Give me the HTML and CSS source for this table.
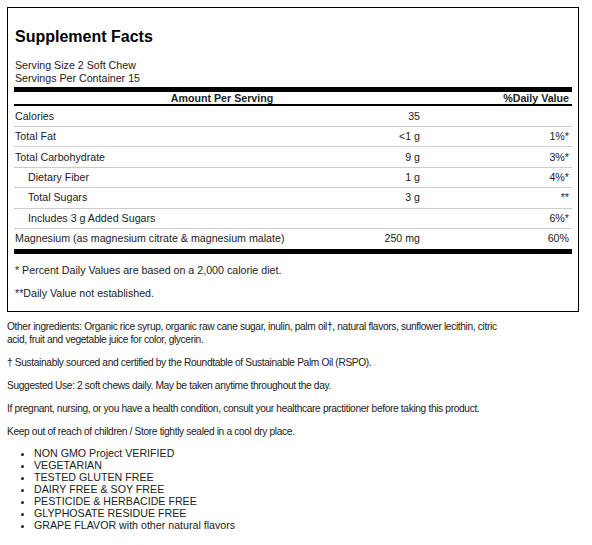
FILE: index.html
```html
<!DOCTYPE html>
<html lang="en">
<head>
<meta charset="utf-8">
<title>Supplement Facts</title>
<link rel="stylesheet" href="styles.css">
</head>
<body>
<div class="label">
  <h1 class="title">Supplement Facts</h1>
  <div class="serving">
    <div>Serving Size 2 Soft Chew</div>
    <div>Servings Per Container 15</div>
  </div>
  <div class="bar"></div>
  <div class="head">
    <span class="head-amt">Amount Per Serving</span>
    <span class="head-dv">%Daily Value</span>
  </div>
  <div class="row first"><span class="name">Calories</span><span class="amt">35</span><span class="dv"></span></div>
  <div class="row"><span class="name">Total Fat</span><span class="amt">&lt;1 g</span><span class="dv">1%*</span></div>
  <div class="row"><span class="name">Total Carbohydrate</span><span class="amt">9 g</span><span class="dv">3%*</span></div>
  <div class="row"><span class="name sub">Dietary Fiber</span><span class="amt">1 g</span><span class="dv">4%*</span></div>
  <div class="row"><span class="name sub">Total Sugars</span><span class="amt">3 g</span><span class="dv">**</span></div>
  <div class="row"><span class="name sub">Includes 3 g Added Sugars</span><span class="amt"></span><span class="dv">6%*</span></div>
  <div class="row last"><span class="name">Magnesium (as magnesium citrate &amp; magnesium malate)</span><span class="amt">250 mg</span><span class="dv">60%</span></div>
  <div class="bar"></div>
  <p class="note">* Percent Daily Values are based on a 2,000 calorie diet.</p>
  <p class="note">**Daily Value not established.</p>
</div>

<div class="details">
  <p class="info">Other ingredients: Organic rice syrup, organic raw cane sugar, inulin, palm oil†, natural flavors, sunflower lecithin, citric acid, fruit and vegetable juice for color, glycerin.</p>
  <p class="info">† Sustainably sourced and certified by the Roundtable of Sustainable Palm Oil (RSPO).</p>
  <p class="info">Suggested Use: 2 soft chews daily. May be taken anytime throughout the day.</p>
  <p class="info">If pregnant, nursing, or you have a health condition, consult your healthcare practitioner before taking this product.</p>
  <p class="info">Keep out of reach of children / Store tightly sealed in a cool dry place.</p>
  <ul class="claims">
    <li>NON GMO Project VERIFIED</li>
    <li>VEGETARIAN</li>
    <li>TESTED GLUTEN FREE</li>
    <li>DAIRY FREE &amp; SOY FREE</li>
    <li>PESTICIDE &amp; HERBACIDE FREE</li>
    <li>GLYPHOSATE RESIDUE FREE</li>
    <li>GRAPE FLAVOR with other natural flavors</li>
  </ul>
</div>
</body>
</html>
```

FILE: styles.css
```css
html, body {
  background: #fff;
}
body {
  margin: 0;
  padding: 7px;
  font-family: "Liberation Sans", Arial, sans-serif;
  font-size: 10.67px;
  line-height: 13px;
  color: #222;
}
.label {
  box-sizing: border-box;
  width: 572px;
  border: 1px solid #000;
  padding: 6px;
  color: #222;
}
.title {
  margin: 13px 1px 13px;
  font-size: 16px;
  line-height: 19px;
  font-weight: bold;
  color: #000;
}
.serving {
  padding-left: 1px;
  margin-bottom: 2px;
}
.bar {
  height: 5px;
  background: #000;
}
.head {
  display: grid;
  grid-template-columns: 1fr 149px;
  height: 12px;
  line-height: 12px;
  font-weight: bold;
  border-bottom: 2px solid #000;
}
.head-amt {
  text-align: center;
  padding-left: 7px;
}
.head-dv {
  text-align: right;
  padding-right: 3px;
}
.row {
  display: grid;
  grid-template-columns: 1fr 120px 149px;
  align-items: center;
  height: 19.4px;
  border-bottom: 1px solid #ccc;
}
.row.first {
  height: 20px;
}
.row.last {
  height: 20px;
  border-bottom: none;
}
.name {
  padding-left: 1px;
}
.name.sub {
  padding-left: 14px;
}
.amt, .dv {
  text-align: right;
  padding-right: 3px;
}
.note {
  margin: 10px 1px 0;
}
.note:last-child {
  margin-bottom: 5px;
}
.details {
  width: 505px;
}
.info {
  margin: 10px 0 0;
  line-height: 13px;
  font-size: 10.2px;
  letter-spacing: -0.35px;
}
.details .info:first-child {
  margin-top: 8px;
}
.claims {
  margin: 9px 0 0;
  padding-left: 27px;
  line-height: 12px;
}
```
